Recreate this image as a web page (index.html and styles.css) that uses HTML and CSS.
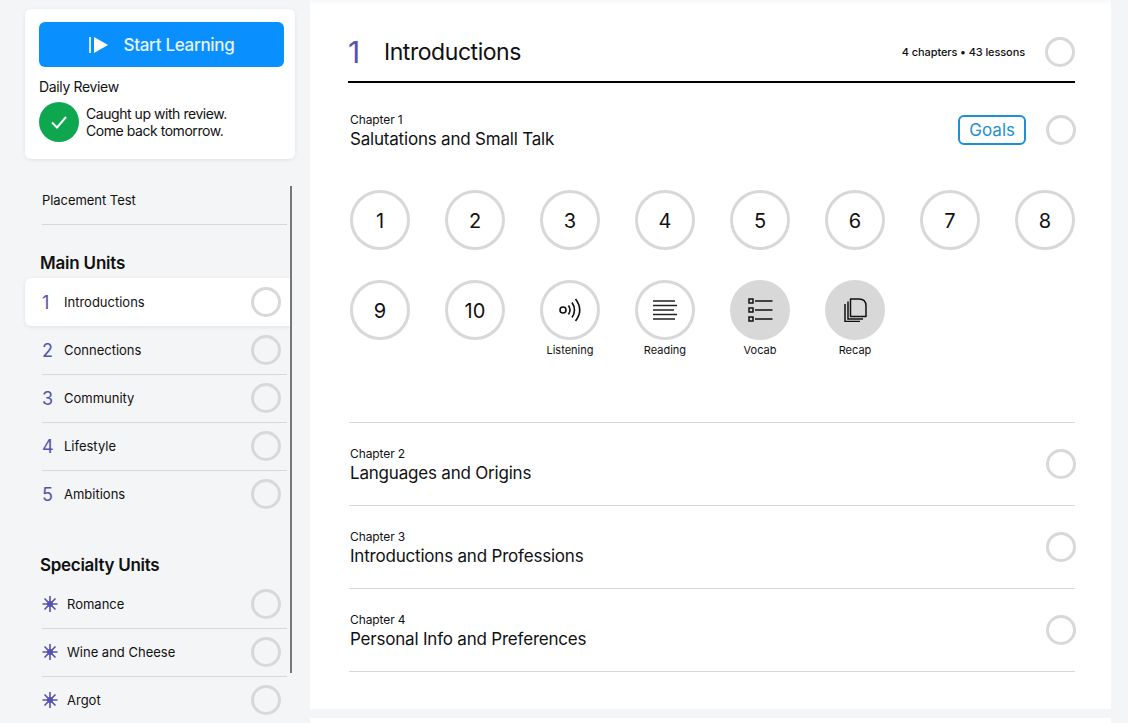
FILE: index.html
```html
<!DOCTYPE html>
<html lang="en">
  <head>
    <meta charset="UTF-8" />
    <meta name="viewport" content="width=device-width, initial-scale=1.0" />
    <title>Course outline</title>
    <link rel="stylesheet" href="styles.css">
  </head>
  <body>
    <div class="page">
      <aside class="sidebar">
        <div class="scroll-thumb"></div>
        <div class="start-card">
          <button class="start-btn">
            <svg class="start-icon" width="19" height="18" viewBox="0 0 19 18">
              <rect x="0" y="1" width="2" height="16" fill="#cfe8ff" />
              <path d="M5 1 L19 9 L5 17 Z" fill="#fff" />
            </svg>
            <span>Start Learning</span>
          </button>
          <div class="review-title">Daily Review</div>
          <div class="review-row">
            <div class="check">
              <svg width="20" height="16" viewBox="0 0 20 16">
                <path d="M3 8.5 L8 13.5 L17 3" fill="none" stroke="#fff" stroke-width="2" />
              </svg>
            </div>
            <div class="review-text">Caught up with review.<br />Come back tomorrow.</div>
          </div>
        </div>

        <div class="placement">Placement Test</div>

        <h2 class="unit-heading">Main Units</h2>
        <div class="unit selected">
          <span class="num">1</span><span class="name">Introductions</span><span class="ring small"></span>
        </div>
        <div class="unit">
          <span class="num">2</span><span class="name">Connections</span><span class="ring small"></span>
        </div>
        <div class="unit">
          <span class="num">3</span><span class="name">Community</span><span class="ring small"></span>
        </div>
        <div class="unit">
          <span class="num">4</span><span class="name">Lifestyle</span><span class="ring small"></span>
        </div>
        <div class="unit last">
          <span class="num">5</span><span class="name">Ambitions</span><span class="ring small"></span>
        </div>

        <h2 class="unit-heading specialty">Specialty Units</h2>
        <div class="unit">
          <svg class="star" width="16" height="16" viewBox="0 0 16 16"><path d="M8 0V16M0.5 8H15.5M2.5 2.5L13.5 13.5M13.5 2.5L2.5 13.5" stroke="#5552b0" stroke-width="1.6" /><circle cx="8" cy="8" r="3" fill="#5552b0" /></svg>
          <span class="name">Romance</span><span class="ring small"></span>
        </div>
        <div class="unit">
          <svg class="star" width="16" height="16" viewBox="0 0 16 16"><path d="M8 0V16M0.5 8H15.5M2.5 2.5L13.5 13.5M13.5 2.5L2.5 13.5" stroke="#5552b0" stroke-width="1.6" /><circle cx="8" cy="8" r="3" fill="#5552b0" /></svg>
          <span class="name">Wine and Cheese</span><span class="ring small"></span>
        </div>
        <div class="unit last">
          <svg class="star" width="16" height="16" viewBox="0 0 16 16"><path d="M8 0V16M0.5 8H15.5M2.5 2.5L13.5 13.5M13.5 2.5L2.5 13.5" stroke="#5552b0" stroke-width="1.6" /><circle cx="8" cy="8" r="3" fill="#5552b0" /></svg>
          <span class="name">Argot</span><span class="ring small"></span>
        </div>
      </aside>

      <main class="content">
        <section class="panel">
          <header class="unit-head">
            <span class="unit-num">1</span>
            <h1>Introductions</h1>
            <span class="counts">4 chapters • 43 lessons</span>
            <span class="ring"></span>
          </header>

          <div class="chapter open">
            <div class="chapter-head">
              <div class="chapter-text">
                <div class="chapter-label">Chapter 1</div>
                <div class="chapter-title">Salutations and Small Talk</div>
              </div>
              <a class="goals">Goals</a>
              <span class="ring"></span>
            </div>
            <div class="lessons">
              <div class="lesson"><div class="bubble digit">1</div></div>
              <div class="lesson"><div class="bubble digit">2</div></div>
              <div class="lesson"><div class="bubble digit">3</div></div>
              <div class="lesson"><div class="bubble digit">4</div></div>
              <div class="lesson"><div class="bubble digit">5</div></div>
              <div class="lesson"><div class="bubble digit">6</div></div>
              <div class="lesson"><div class="bubble digit">7</div></div>
              <div class="lesson"><div class="bubble digit">8</div></div>
              <div class="lesson"><div class="bubble digit">9</div></div>
              <div class="lesson"><div class="bubble digit">10</div></div>
              <div class="lesson">
                <div class="bubble">
                  <svg width="24" height="24" viewBox="0 0 24 24" fill="none" stroke="#111" stroke-width="1.6">
                    <circle cx="5" cy="12" r="3" />
                    <path d="M10.5 7.5 Q13.5 12 10.5 16.5" />
                    <path d="M14 4.5 Q19 12 14 19.5" />
                    <path d="M17.5 1 Q26 12 17.5 23" />
                  </svg>
                </div>
                <div class="lesson-label">Listening</div>
              </div>
              <div class="lesson">
                <div class="bubble">
                  <svg width="24" height="20" viewBox="0 0 24 20" stroke="#222" stroke-width="1.5">
                    <path d="M0 1H22M0 5.5H24M0 10H21M0 14.5H24M0 19H22" />
                  </svg>
                </div>
                <div class="lesson-label">Reading</div>
              </div>
              <div class="lesson">
                <div class="bubble filled">
                  <svg width="25" height="24" viewBox="0 0 25 24" fill="none" stroke="#111" stroke-width="1.5">
                    <rect x="1" y="1" width="4" height="4" />
                    <rect x="1" y="10" width="4" height="4" />
                    <rect x="1" y="19" width="4" height="4" />
                    <path d="M7 3H24.5M7 12H24.5M7 21H24.5" />
                  </svg>
                </div>
                <div class="lesson-label">Vocab</div>
              </div>
              <div class="lesson">
                <div class="bubble filled">
                  <svg width="23" height="24" viewBox="0 0 23 24" fill="none" stroke="#111" stroke-width="1.5">
                    <path d="M6.5 1H15Q22 1 22 8V18.5H6.5Z" stroke-linejoin="round" />
                    <path d="M4 3.5V21H19" />
                    <path d="M1 6V23.5H16" />
                  </svg>
                </div>
                <div class="lesson-label">Recap</div>
              </div>
            </div>
          </div>

          <div class="chapter">
            <div class="chapter-head">
              <div class="chapter-text">
                <div class="chapter-label">Chapter 2</div>
                <div class="chapter-title">Languages and Origins</div>
              </div>
              <span class="ring"></span>
            </div>
          </div>
          <div class="chapter">
            <div class="chapter-head">
              <div class="chapter-text">
                <div class="chapter-label">Chapter 3</div>
                <div class="chapter-title">Introductions and Professions</div>
              </div>
              <span class="ring"></span>
            </div>
          </div>
          <div class="chapter">
            <div class="chapter-head">
              <div class="chapter-text">
                <div class="chapter-label">Chapter 4</div>
                <div class="chapter-title">Personal Info and Preferences</div>
              </div>
              <span class="ring"></span>
            </div>
          </div>
        </section>
        <section class="panel next"></section>
      </main>
    </div>
  </body>
</html>
```

FILE: styles.css
```css
*,
*::before,
*::after {
  padding: 0;
  margin: 0;
  box-sizing: border-box;
}

html,
body {
  height: 723px;
  overflow: hidden;
}

body {
  background-color: #f3f5f7;
  font-family: Inter, "Open Sans", sans-serif;
  color: #111;
}

.page {
  display: flex;
  height: 723px;
  overflow: hidden;
}

/* sidebar */
.sidebar {
  position: relative;
  width: 310px;
  flex: none;
  padding: 9px 15px 0 25px;
}
.scroll-thumb {
  position: absolute;
  left: 290px;
  top: 186px;
  width: 2px;
  height: 487px;
  background-color: #777;
  z-index: 2;
}
.start-card {
  height: 150px;
  padding: 13px 11px 0 14px;
  background-color: #fff;
  border-radius: 6px;
  box-shadow: 0 1px 4px rgba(0, 0, 0, 0.08);
}
.start-btn {
  display: flex;
  align-items: center;
  justify-content: center;
  gap: 16px;
  width: 100%;
  height: 45px;
  border: none;
  border-radius: 6px;
  background-color: #0a8fff;
  color: #e6f4ff;
  font-family: inherit;
  font-size: 17px;
  font-weight: 500;
  letter-spacing: -0.3px;
}
.review-title {
  margin-top: 11px;
  font-size: 14px;
  line-height: 17px;
  letter-spacing: -0.35px;
}
.review-row {
  display: flex;
  align-items: center;
  gap: 7px;
  margin-top: 7px;
}
.check {
  display: flex;
  align-items: center;
  justify-content: center;
  width: 40px;
  height: 40px;
  border-radius: 50%;
  background-color: #0ea750;
}
.review-text {
  font-size: 14px;
  line-height: 17px;
  letter-spacing: -0.45px;
}
.placement {
  height: 49px;
  margin: 17px 8px 0 17px;
  padding-top: 16px;
  font-size: 13px;
  line-height: 16px;
  letter-spacing: -0.05px;
  border-bottom: 1px solid #d8d8d8;
}
.unit-heading {
  margin: 28px 0 0 15px;
  height: 25px;
  font-size: 17px;
  line-height: 20px;
  font-weight: 600;
  letter-spacing: -0.2px;
}
.unit-heading.specialty {
  margin-top: 37px;
  letter-spacing: -0.3px;
}
.unit {
  display: flex;
  align-items: center;
  height: 49px;
  margin: 0 8px -1px 17px;
  padding-right: 6px;
  border-bottom: 1px solid #d8d8d8;
  font-size: 13px;
}
.unit.selected {
  height: 48px;
  margin: 0 5px 0 0;
  padding: 0 9px 0 17px;
  background-color: #fff;
  border-bottom: none;
  border-radius: 6px 0 0 6px;
  box-shadow: 0 1px 4px rgba(0, 0, 0, 0.08);
}
.unit.last {
  border-bottom-color: transparent;
}
.num {
  width: 22px;
  color: #5552b0;
  font-size: 18px;
}
.star {
  margin-right: 9px;
}
.name {
  flex: 1;
}

/* progress ring, used in both columns */
.ring {
  width: 30px;
  height: 30px;
  flex: none;
  border: 3px solid #d8d8d8;
  border-radius: 50%;
}

/* main column */
.content {
  width: 801px;
  flex: none;
}
.panel {
  height: 709px;
  padding: 0 36px 0 38px;
  background: linear-gradient(#f7f8f9, #fff 5px);
}
.panel.next {
  height: 40px;
  margin-top: 9px;
  background: #fff;
}
.unit-head {
  display: flex;
  align-items: center;
  height: 83px;
  padding-top: 23px;
  border-bottom: 2px solid #000;
}
.unit-num {
  width: 36px;
  font-size: 30px;
  color: #5552b0;
}
h1 {
  flex: 1;
  font-size: 23px;
  font-weight: 400;
  letter-spacing: -0.45px;
}
.counts {
  margin-right: 20px;
  font-size: 11px;
  font-weight: 500;
  letter-spacing: -0.1px;
}
.chapter {
  margin-left: 1px;
  padding-left: 1px;
  border-bottom: 1px solid #d8d8d8;
}
.chapter-head {
  display: flex;
  align-items: center;
  height: 82px;
  margin-right: -1px;
}
.chapter-text {
  flex: 1;
  padding-top: 1px;
}
.chapter-label {
  font-size: 12px;
  line-height: 14px;
  letter-spacing: -0.1px;
}
.chapter-title {
  margin-top: 2px;
  font-size: 17px;
  line-height: 20px;
  letter-spacing: -0.2px;
}
.goals {
  margin-right: 20px;
  padding: 0 9px;
  height: 30px;
  line-height: 27px;
  border: 2px solid #1d8fd6;
  border-radius: 6px;
  color: #1d8fd6;
  font-size: 17px;
}
.chapter.open {
  height: 340px;
  padding-top: 6px;
}
.lessons {
  display: grid;
  grid-template-columns: repeat(8, 60px);
  justify-content: space-between;
  row-gap: 30px;
  margin-top: 19px;
}
.lesson {
  height: 60px;
}
.bubble {
  display: flex;
  align-items: center;
  justify-content: center;
  width: 60px;
  height: 60px;
  border: 3px solid #d8d8d8;
  border-radius: 50%;
}
.bubble.digit {
  padding-top: 1px;
  font-size: 20px;
}
.bubble.filled {
  background-color: #d8d8d8;
}
.lesson-label {
  margin: 3px -10px 0;
  text-align: center;
  font-size: 11px;
  line-height: 14px;
}
```
